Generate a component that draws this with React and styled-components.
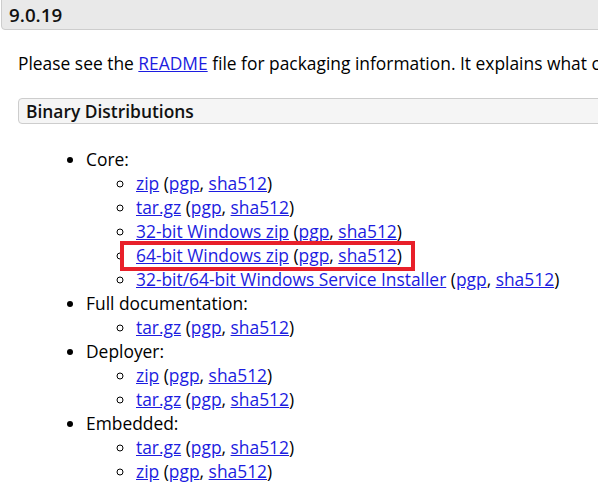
import React from 'react'
import styled, { createGlobalStyle } from 'styled-components'

const Global = createGlobalStyle`
  body {
    margin: 0;
    background: #fff;
    font-family: "Open Sans", "Noto Sans", sans-serif;
    font-size: 17.4px;
    color: #000;
  }
`

const Page = styled.div`
  position: relative;
  width: 598px;
  height: 492px;
  overflow: hidden;
`

const VersionHead = styled.h3`
  margin: -10px -20px 0 1px;
  padding: 10px 8px 0 7px;
  height: 40px;
  box-sizing: border-box;
  background: #e9e9e9;
  border: 1px solid #cdcdcd;
  border-radius: 4px;
  font-size: 18.8px;
  font-weight: 600;
  line-height: 28px;
  color: #111;
`

const Section = styled.div`
  padding: 0 0 0 18px;
`

const Para = styled.p`
  margin: 21px 0 0;
  white-space: nowrap;
  line-height: 24px;
`

const SubHead = styled.h4`
  margin: 23px -20px 0 0;
  padding: 0 7px;
  height: 26px;
  box-sizing: border-box;
  background: #f5f5f5;
  border: 1px solid #cdcdcd;
  border-radius: 4px;
  font-size: 17.4px;
  font-weight: 600;
  line-height: 24px;
  color: #111;
`

const List = styled.ul`
  margin: 23px 0 0;
  padding-left: 68px;
  line-height: 24px;
  list-style: disc;
`

const SubList = styled.ul`
  margin: 0;
  padding-left: 50px;
  list-style: circle;
  white-space: nowrap;
`

const Link = styled.a`
  color: #1c1ce0;
  text-decoration: underline;
`

const Highlight = styled.div`
  position: absolute;
  left: 120px;
  top: 241px;
  width: 295px;
  height: 30px;
  box-sizing: border-box;
  border: 4px solid #e8202a;
  pointer-events: none;
`

const Sig = () => (
  <>
    {' ('}<Link href="#">pgp</Link>, <Link href="#">sha512</Link>)
  </>
)

const groups = [
  { title: 'Core:', items: ['zip', 'tar.gz', '32-bit Windows zip', '64-bit Windows zip', '32-bit/64-bit Windows Service Installer'] },
  { title: 'Full documentation:', items: ['tar.gz'] },
  { title: 'Deployer:', items: ['zip', 'tar.gz'] },
  { title: 'Embedded:', items: ['tar.gz', 'zip'] },
]

export default function App() {
  return (
    <Page>
      <Global />
      <VersionHead>9.0.19</VersionHead>
      <Section>
        <Para>
          Please see the <Link href="#">README</Link> file for packaging information. It explains what c
        </Para>
        <SubHead>Binary Distributions</SubHead>
        <List>
          {groups.map(g => (
            <li key={g.title}>
              {g.title}
              <SubList>
                {g.items.map(it => (
                  <li key={it}>
                    <Link href="#">{it}</Link>
                    <Sig />
                  </li>
                ))}
              </SubList>
            </li>
          ))}
        </List>
      </Section>
      <Highlight />
    </Page>
  )
}
